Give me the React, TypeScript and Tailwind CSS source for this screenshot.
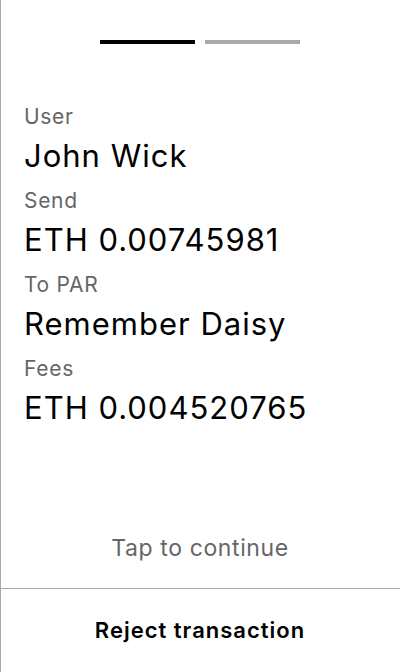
export default function App() {
  const rows = [
    { label: "User", value: "John Wick" },
    { label: "Send", value: "ETH 0.00745981" },
    { label: "To PAR", value: "Remember Daisy" },
    { label: "Fees", value: "ETH 0.004520765" },
  ];
  return (
    <div
      className="flex h-[672px] w-[400px] flex-col bg-white shadow-[inset_1px_0_0_#a9a9a9]"
      style={{ fontFamily: "Inter, 'Noto Sans', sans-serif" }}
    >
      <div className="flex justify-center gap-[10px] pt-10">
        <div className="h-1 w-[95px] bg-black" />
        <div className="h-1 w-[95px] bg-[#a9a9a9]" />
      </div>
      <div className="flex flex-col px-6 pt-[59px]">
        {rows.map((r) => (
          <div key={r.label} className="mt-[13px] flex flex-col first:mt-0">
            <div className="text-[21px] leading-[28px] tracking-[0.7px] text-[#666666]">{r.label}</div>
            <div className="mt-[7px] text-[31px] leading-[36px] tracking-[1px] text-black">{r.value}</div>
          </div>
        ))}
      </div>
      <div className="flex-1" />
      <div className="pb-[26px] text-center text-[23px] leading-[28px] tracking-[0.6px] text-[#666666]">
        Tap to continue
      </div>
      <div className="h-px bg-[#a9a9a9]" />
      <button className="flex h-[83px] items-center justify-center text-[22px] font-semibold tracking-[1px] text-black">
        Reject transaction
      </button>
    </div>
  );
}
